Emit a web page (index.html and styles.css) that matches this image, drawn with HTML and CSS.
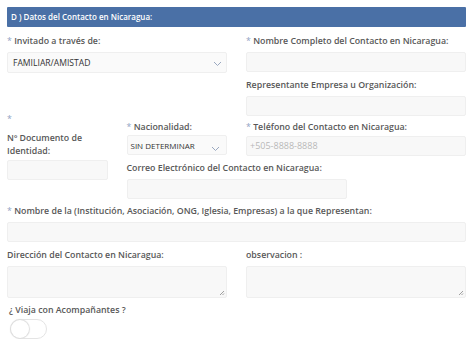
FILE: index.html
```html
<!DOCTYPE html>
<html lang="es">
<head>
    <meta charset="UTF-8">
    <title>Datos del Contacto en Nicaragua</title>
    <link rel="stylesheet" href="styles.css">
</head>
<body>
    <div class="panel">
        <div class="panel-heading">D ) Datos del Contacto en Nicaragua:</div>

        <div class="row two first">
            <div class="field">
                <label><span class="req">*</span> Invitado a través de:</label>
                <div class="select tall">
                    <span>FAMILIAR/AMISTAD</span>
                    <svg width="9" height="6" viewBox="0 0 9 6"><path d="M1 1l3.5 3.5L8 1" fill="none" stroke="#9aa8c0" stroke-width="1"/></svg>
                </div>
            </div>
            <div class="field">
                <label><span class="req">*</span> Nombre Completo del Contacto en Nicaragua:</label>
                <div class="input"></div>
                <label class="next">Representante Empresa u Organización:</label>
                <div class="input"></div>
            </div>
        </div>

        <div class="row quad">
            <div class="field doc">
                <label><span class="req block">*</span>Nº Documento de Identidad:</label>
                <div class="input"></div>
            </div>
            <div class="field nac">
                <label><span class="req">*</span> Nacionalidad:</label>
                <div class="select small">
                    <span>SIN DETERMINAR</span>
                    <svg width="9" height="6" viewBox="0 0 9 6"><path d="M1 1l3.5 3.5L8 1" fill="none" stroke="#9aa8c0" stroke-width="1"/></svg>
                </div>
            </div>
            <div class="field tel">
                <label><span class="req">*</span> Teléfono del Contacto en Nicaragua:</label>
                <div class="input"><span class="placeholder">+505-8888-8888</span></div>
            </div>
            <div class="field mail">
                <label>Correo Electrónico del Contacto en Nicaragua:</label>
                <div class="input"></div>
            </div>
        </div>

        <div class="row wide">
            <div class="field">
                <label><span class="req">*</span> Nombre de la (Institución, Asociación, ONG, Iglesia, Empresas) a la que Representan:</label>
                <div class="input"></div>
            </div>
        </div>

        <div class="row two notes">
            <div class="field">
                <label>Dirección del Contacto en Nicaragua:</label>
                <div class="textarea">
                    <svg class="grip" width="6" height="6" viewBox="0 0 6 6"><path d="M5 1L1 5M5 3.5L3.5 5" stroke="#888" stroke-width="0.8"/></svg>
                </div>
            </div>
            <div class="field">
                <label>observacion :</label>
                <div class="textarea">
                    <svg class="grip" width="6" height="6" viewBox="0 0 6 6"><path d="M5 1L1 5M5 3.5L3.5 5" stroke="#888" stroke-width="0.8"/></svg>
                </div>
            </div>
        </div>

        <div class="companions">
            <label>¿ Viaja con Acompañantes ?</label>
            <div class="switch"><span class="knob"></span></div>
        </div>
    </div>
</body>
</html>
```

FILE: styles.css
```css
body {
    margin: 0;
    font-family: "Open Sans", sans-serif;
    background-color: #fff;
    color: #555;
}

.panel {
    padding: 7px 8px 0 7px;
}

.panel-heading {
    background-color: #4a70a6;
    color: #fff;
    font-size: 8px;
    font-weight: 600;
    height: 20px;
    line-height: 20px;
    padding-left: 4px;
    border-radius: 1px;
}

label {
    display: block;
    font-size: 8.8px;
    font-weight: 600;
    color: #585858;
    line-height: 13px;
}

.req {
    color: #8fa3c4;
    font-weight: normal;
}

.req.block {
    display: block;
    margin-bottom: 6px;
}

.row {
    display: grid;
    column-gap: 19px;
}

.row.two {
    grid-template-columns: 1fr 1fr;
}

.row.first {
    padding-top: 8px;
}

.input,
.select,
.textarea {
    box-sizing: border-box;
    background-color: #f8f8f8;
    border: 1px solid #efefef;
    border-radius: 2px;
    height: 20px;
    margin-top: 4px;
}

.input .placeholder {
    display: block;
    font-size: 9px;
    color: #b8b8b8;
    line-height: 18px;
    padding-left: 3px;
}

.select {
    display: flex;
    align-items: center;
    justify-content: space-between;
    padding: 0 4px 0 5px;
    background-color: #fafafa;
    color: #333;
}

.select.tall {
    height: 21px;
    font-size: 8.6px;
}

.select.tall svg {
    margin-top: 3px;
}

.select.small {
    font-size: 8px;
    margin-top: 1px;
    padding-right: 6px;
    padding-left: 3px;
}

.select.small svg {
    margin-top: 8px;
}

.next {
    margin-top: 7px;
}

/* four column block */
.row.quad {
    grid-template-columns: repeat(4, 1fr);
    grid-template-rows: auto auto;
    margin-top: -11px;
}

.doc {
    grid-column: 1;
    grid-row: 1 / 3;
    padding-top: 8px;
}

.doc label {
    padding-right: 16px;
}

.doc .input {
    margin-top: 2px;
}

.nac {
    grid-column: 2;
    grid-row: 1;
    padding-top: 16px;
}

.tel {
    grid-column: 3 / 5;
    grid-row: 1;
    padding-top: 16px;
}

.tel .input {
    margin-top: 2px;
}

.mail {
    grid-column: 2 / 4;
    grid-row: 2;
    padding-top: 6px;
}

.row.wide {
    margin-top: 6px;
}

.row.notes {
    margin-top: 7px;
}

.textarea {
    height: 32px;
    position: relative;
}

.grip {
    position: absolute;
    right: 1px;
    bottom: 1px;
}

.companions {
    margin-top: 6px;
    padding-left: 2px;
}

.switch {
    box-sizing: border-box;
    width: 37px;
    height: 20px;
    border: 1px solid #e4e4e4;
    border-radius: 10px;
    margin-top: 2px;
    margin-left: 1px;
    background-color: #fff;
    position: relative;
}

.knob {
    position: absolute;
    left: 0;
    top: 0;
    width: 18px;
    height: 18px;
    border-radius: 50%;
    background-color: #fff;
    box-shadow: 0 0 1px 1px #ddd;
}
```
